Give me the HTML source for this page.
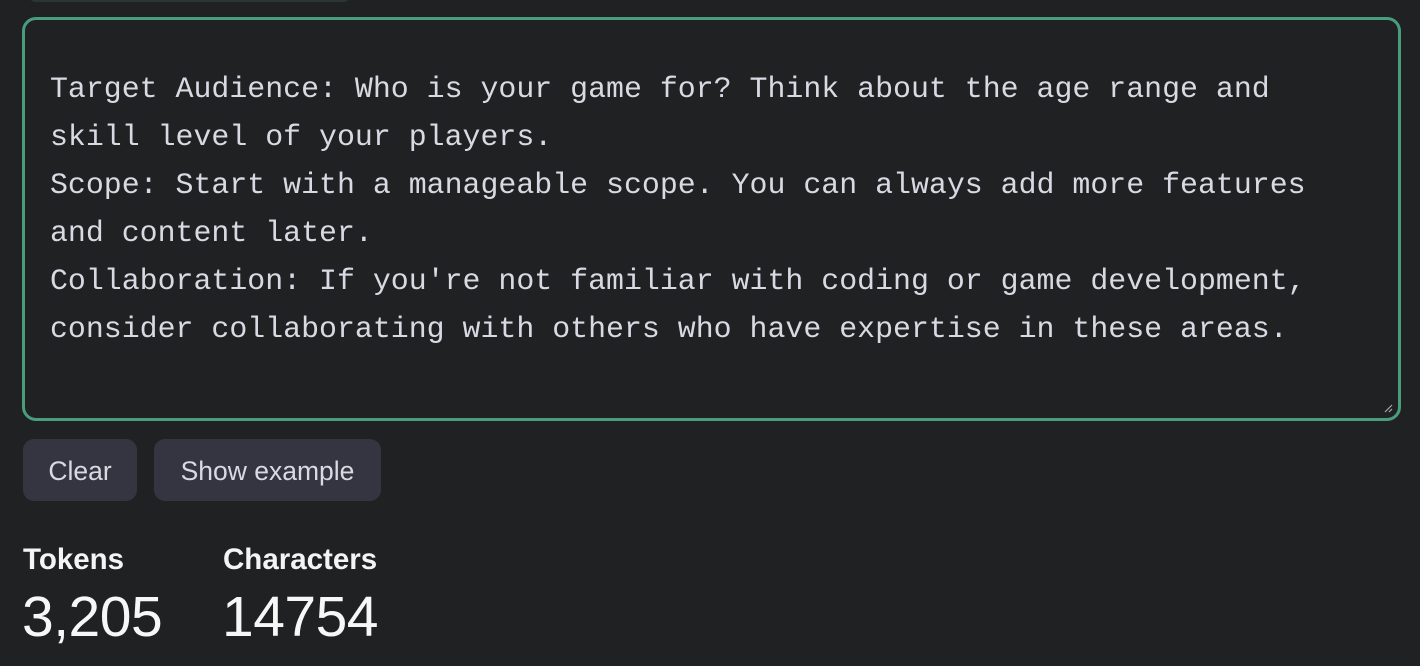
<!DOCTYPE html>
<html><head><style>
html,body{margin:0;padding:0;background:#202123;width:1420px;height:666px;overflow:hidden;font-family:"Liberation Sans",sans-serif;}
.top{position:absolute;left:28px;top:-20px;width:323px;height:22px;background:#2b3532;border-radius:8px;}
.ta{position:absolute;left:22px;top:17px;width:1373px;height:398px;border:3px solid #4a9d7c;border-radius:14px;box-sizing:content-box;}
.txt{position:absolute;left:50px;top:65px;font-family:"Liberation Mono",monospace;font-size:29.9px;line-height:48px;color:#d9d9e3;white-space:pre;}
.btn{position:absolute;top:439px;height:62px;background:#343541;border-radius:11px;color:#d9d9e3;font-size:26.5px;line-height:64px;text-align:center;}
.lab{position:absolute;top:543px;font-size:29.5px;font-weight:bold;color:#f4f4f6;letter-spacing:0;}
.num{position:absolute;top:584px;font-size:57px;color:#f7f7f8;letter-spacing:-0.5px;}
.grip{position:absolute;left:1383px;top:403px;width:10px;height:10px;}
</style></head><body>
<div class="top"></div>
<div class="ta"></div>
<div class="txt">Target Audience: Who is your game for? Think about the age range and
skill level of your players.
Scope: Start with a manageable scope. You can always add more features
and content later.
Collaboration: If you're not familiar with coding or game development,
consider collaborating with others who have expertise in these areas.</div>
<svg class="grip" viewBox="0 0 10 10"><path d="M9 2L2 9M9 6L6 9" stroke="#aaa" stroke-width="1.2"/></svg>
<div class="btn" style="left:23px;width:114px">Clear</div>
<div class="btn" style="left:154px;width:227px">Show example</div>
<div class="lab" style="left:23px">Tokens</div>
<div class="lab" style="left:223px">Characters</div>
<div class="num" style="left:22px">3,205</div>
<div class="num" style="left:222px">14754</div>
</body></html>
